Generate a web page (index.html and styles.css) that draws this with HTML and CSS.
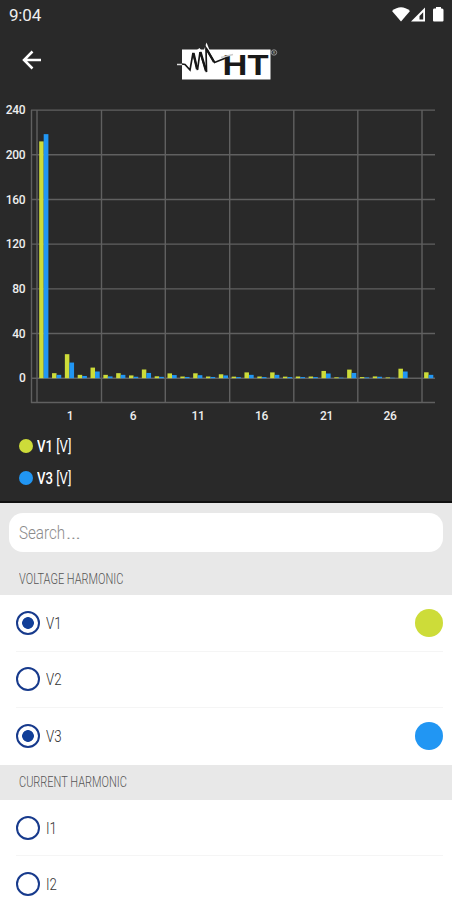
FILE: index.html
```html
<!DOCTYPE html>
<html lang="en">

<head>
    <meta charset="UTF-8">
    <meta name="viewport" content="width=device-width, initial-scale=1.0">
    <title>Harmonics</title>
    <link rel="stylesheet" href="styles.css">
</head>

<body>
    <div class="top-panel">
        <div class="status-bar">
            <span class="clock">9:04</span>
            <svg class="status-icons" width="54" height="18" viewBox="0 0 54 18">
                <path d="M0 5Q9 -2.500 18 5L9 15.500Z" fill="#fff" />
                <path d="M19 15.500L33 1.500V15.500Z" fill="#fff" />
                <path d="M27.500 10L31.200 6.300V13.500H27.500Z" fill="#292929" />
                <path d="M42 2.500H44V1H49V2.500H50Q51.500 2.500 51.500 4V14.500Q51.500 15.500 50.500 15.500H42Q41 15.500 41 14.500V4Q41 2.500 42 2.500Z" fill="#fff" />
            </svg>
        </div>
        <header class="app-bar">
            <svg class="back" width="20" height="20" viewBox="0 0 20 20">
                <path d="M19 10H2M10.500 1.500L2 10L10.500 18.500" fill="none" stroke="#fff" stroke-width="2.500" />
            </svg>
            <svg class="logo" width="104" height="42" viewBox="0 0 104 42">
                <rect x="5" y="9.500" width="88.500" height="30" fill="#fff" />
                <path d="M27 10L29.500 2.500L32.500 10Z" fill="#fff" />
                <path d="M20 10L22.500 8L24 10Z" fill="#fff" />
                <path d="M0 24.500H6" stroke="#ddd" stroke-width="1.500" />
                <path d="M5 24L8 24.500L13 30L16 13L20.500 30L23 12L29.500 32L29 8L37.500 22.500L50 17.500" fill="none" stroke="#161616" stroke-width="1.700" />
                <path d="M16.500 13L20 29M23.500 12L29 31M29.500 9L37 22" stroke="#161616" stroke-width="2.400" />
                <text class="logo-text" x="45.500" y="35" textLength="46" lengthAdjust="spacingAndGlyphs">HT</text>
                <path d="M44 17.500L56 14.500" stroke="#ccc" stroke-width="1.300" />
                <circle cx="97" cy="12.500" r="2.700" fill="none" stroke="#aaa" stroke-width="0.800" />
                <text class="logo-mark" x="95.700" y="14.200">R</text>
            </svg>
        </header>
        <svg id="chart" width="452" height="330" viewBox="0 100 452 330"></svg>
        <ul class="legend">
            <li><span class="dot lime"></span><span class="legend-label">V1 <span class="unit">[V]</span></span></li>
            <li><span class="dot blue"></span><span class="legend-label">V3 <span class="unit">[V]</span></span></li>
        </ul>
    </div>

    <div class="search">
        <div class="search-box"><span class="search-text">Search<span class="ellipsis">…</span></span></div>
    </div>

    <h2 class="group-title"><span>VOLTAGE HARMONIC</span></h2>
    <ul class="channels">
        <li><span class="radio checked"></span><span class="name">V1</span><span class="swatch lime"></span></li>
        <li><span class="radio"></span><span class="name">V2</span></li>
        <li><span class="radio checked"></span><span class="name">V3</span><span class="swatch blue"></span></li>
    </ul>
    <h2 class="group-title current"><span>CURRENT HARMONIC</span></h2>
    <ul class="channels">
        <li><span class="radio"></span><span class="name">I1</span></li>
        <li><span class="radio"></span><span class="name">I2</span></li>
    </ul>

    <script src="chart.js"></script>
</body>

</html>
```
FILE: styles.css
```css
* {
    box-sizing: border-box;
    margin: 0;
    padding: 0;
}

body {
    width: 452px;
    height: 900px;
    overflow: hidden;
    background-color: #fff;
    font-family: Roboto, "Liberation Sans", sans-serif;
}

ul {
    list-style: none;
}

.top-panel {
    height: 503px;
    background-color: #292929;
    border-bottom: 2px solid #101010;
    color: #fff;
}

.status-bar {
    height: 30px;
    padding: 0 6px 0 9px;
    display: flex;
    align-items: center;
    justify-content: space-between;
}

.clock {
    font-size: 17px;
    letter-spacing: -0.2px;
    color: #eee;
}

.status-icons {
    margin: -1px 0 0 0;
}

.app-bar {
    height: 70px;
    padding: 10px 22px;
    display: flex;
    align-items: flex-start;
}

.back {
    margin-top: 10px;
}

.logo {
    margin-left: 135px;
}

.logo-text {
    font-family: "Liberation Sans", sans-serif;
    font-size: 29px;
    font-weight: bold;
    fill: #191919;
}

.logo-mark {
    font-size: 4px;
    fill: #aaa;
}

/* chart */
#chart {
    display: block;
}

#chart text {
    font-size: 12px;
    font-weight: 500;
    letter-spacing: -0.2px;
    fill: #eee;
}

.grid {
    stroke: #606060;
    stroke-width: 1.4px;
}

.bar-v1 {
    fill: #cddc39;
}

.bar-v3 {
    fill: #2196f3;
}

.legend li {
    height: 32px;
    padding-left: 19px;
    display: flex;
    align-items: center;
}

.dot {
    width: 14px;
    height: 14px;
    margin-right: 4px;
    border-radius: 50%;
}

.lime {
    background-color: #cddc39;
}

.blue {
    background-color: #2196f3;
}

.legend-label {
    font-size: 17px;
    font-weight: 500;
    transform: scaleX(0.77);
    transform-origin: left;
}

.unit {
    font-weight: 400;
}

/* list */
.search {
    height: 59px;
    padding: 10px 9px 0;
    background-color: #e8e8e8;
}

.search-box {
    height: 39px;
    padding-left: 10px;
    display: flex;
    align-items: center;
    border-radius: 14px;
    background-color: #fff;
}

.search-text {
    font-size: 19px;
    font-weight: 300;
    color: #8c8c8c;
    transform: scaleX(0.8);
    transform-origin: left;
}

.ellipsis {
    display: inline-block;
    transform: scaleX(1.6);
    transform-origin: left;
}

.group-title {
    height: 33px;
    padding-left: 19px;
    display: flex;
    align-items: center;
    background-color: #e8e8e8;
    font-size: 14px;
    font-weight: 300;
    color: #555;
}

.group-title span {
    transform: scaleX(0.785);
    transform-origin: left;
}

.group-title.current {
    height: 35px;
}

.channels li {
    height: 56.6px;
    margin: 0 9px 0 16px;
    display: flex;
    align-items: center;
    border-bottom: 1px solid #f5f5f5;
}

.channels li:last-child {
    border-bottom-color: #fff;
}

.radio {
    width: 24px;
    height: 24px;
    margin-right: 6px;
    border: 2px solid #173a8c;
    border-radius: 50%;
}

.radio.checked {
    background: radial-gradient(circle, #123f98 5.5px, #fff 6.2px);
}

.name {
    font-size: 17px;
    color: #333;
    font-weight: 300;
    transform: scaleX(0.78);
    transform-origin: left;
}

.swatch {
    width: 28px;
    height: 28px;
    margin-left: auto;
    border-radius: 50%;
}
```
FILE: chart.js
```js
const chart = document.getElementById('chart');
const baseline = 378.2;
const scale = 1.117; // pixels per volt

const v1 = [212, 4.5, 21.5, 3, 9.5, 3, 4.5, 2.5, 7.8, 1.7, 4.3, 1.5, 4.4, 1.5, 3.5, 1.4,
    5.2, 1.5, 5.2, 1.4, 1.5, 1.5, 6.5, 0.8, 7.7, 1, 1.6, 0.7, 8.5, 0, 5.3];
const v3 = [218.5, 3, 14, 2, 6, 1.6, 3, 1.3, 4.7, 1.2, 2.8, 1.1, 2.7, 1.1, 2.5, 1,
    3, 1, 3, 1, 1, 1, 4.2, 0.5, 4.7, 0.7, 1.3, 0.4, 6, 0, 3];

function add(tag, attrs, text) {
    const el = document.createElementNS('http://www.w3.org/2000/svg', tag);
    for (const key in attrs) {
        el.setAttribute(key, attrs[key]);
    }
    if (text !== undefined) {
        el.textContent = text;
    }
    chart.appendChild(el);
}

// horizontal grid and voltage labels
for (let volt = 0; volt <= 240; volt += 40) {
    const y = baseline - volt * scale;
    add('line', { class: 'grid', x1: 31, x2: 435, y1: y, y2: y });
    add('text', { x: 25.5, y: y + 4.2, 'text-anchor': 'end' }, volt);
}
add('line', { class: 'grid', x1: 31, x2: 435, y1: 402.5, y2: 402.5 });

// vertical grid
[31.5, 37, 101.5, 165.3, 229.7, 293.8, 357.8, 422].forEach((x) => {
    add('line', { class: 'grid', x1: x, x2: x, y1: 110, y2: 403 });
});

[[1, 70], [6, 133], [11, 198], [16, 261.5], [21, 326.5], [26, 390]].forEach(([label, x]) => {
    add('text', { x: x, y: 419.5, 'text-anchor': 'middle' }, label);
});

v1.forEach((volt, i) => {
    const x = 39.2 + i * 12.83;
    const h1 = volt * scale;
    const h3 = v3[i] * scale;
    add('rect', { class: 'bar-v1', x: x, y: baseline - h1, width: 4.5, height: h1 });
    add('rect', { class: 'bar-v3', x: x + 4.5, y: baseline - h3, width: 4.7, height: h3 });
});
```
